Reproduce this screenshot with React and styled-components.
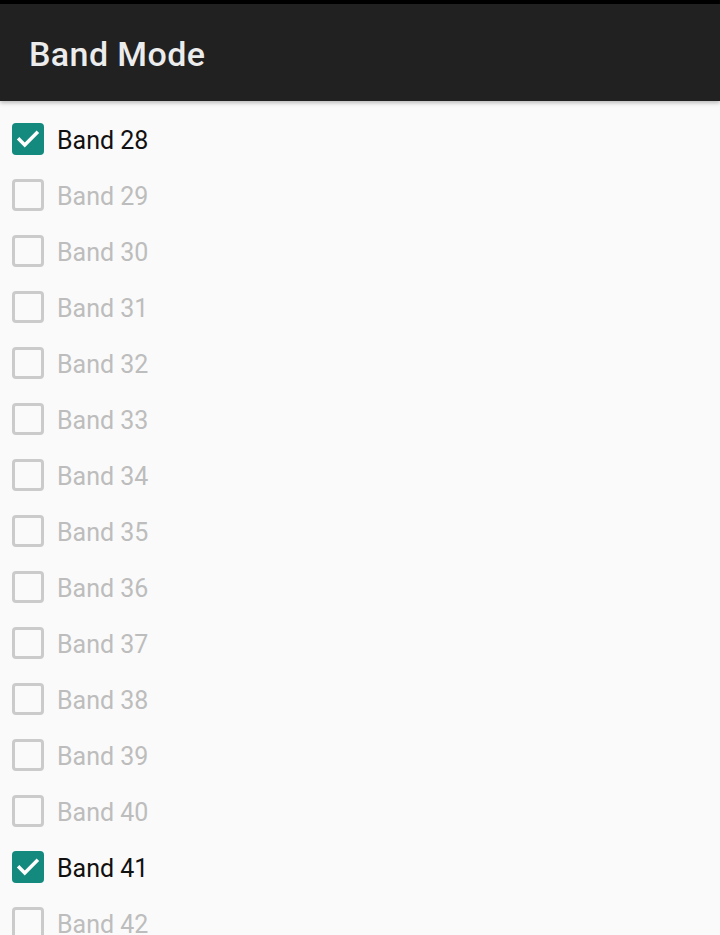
import React from 'react';
import styled, { createGlobalStyle } from 'styled-components';

const Global = createGlobalStyle`
  html, body {
    margin: 0;
    padding: 0;
    background: #fafafa;
    overflow: hidden;
  }
  body {
    font-family: Roboto, "Noto Sans", sans-serif;
  }
`;

const Screen = styled.div`
  width: 720px;
  height: 935px;
  overflow: hidden;
  background: #fafafa;
  border-top: 4px solid #000;
  box-sizing: border-box;
`;

const AppBar = styled.header`
  height: 97px;
  background: #212121;
  display: flex;
  align-items: center;
  padding: 3px 0 0 29px;
  box-sizing: border-box;
  box-shadow: 0 2px 4px rgba(0, 0, 0, 0.25);
  position: relative;
  z-index: 1;
`;

const Title = styled.h1`
  margin: 0;
  font-size: 34px;
  font-weight: 500;
  color: #ececec;
  letter-spacing: 0.4px;
`;

const List = styled.ul`
  list-style: none;
  margin: 0;
  padding: 10px 0 0;
`;

const Row = styled.li`
  height: 56px;
  display: flex;
  align-items: center;
  padding-left: 12px;
  gap: 13px;
`;

const Box = styled.span`
  width: 32px;
  height: 32px;
  box-sizing: border-box;
  border-radius: 4px;
  display: flex;
  align-items: center;
  justify-content: center;
  background: ${p => (p.checked ? '#138a7d' : 'transparent')};
  border: ${p => (p.checked ? 'none' : '3px solid #cbcbcb')};
`;

const Label = styled.span`
  font-size: 25px;
  padding-top: 2px;
  color: ${p => (p.checked ? '#111' : '#bdbdbd')};
`;

const bands = [];
for (let n = 28; n <= 42; n++) bands.push({ n, checked: n === 28 || n === 41 });

const Check = () => (
  <svg width="26" height="26" viewBox="0 0 24 24">
    <path d="M4 12.5l5 5 11-11" fill="none" stroke="#fff" strokeWidth="3.2" strokeLinecap="square" />
  </svg>
);

export default function App() {
  return (
    <>
      <Global />
      <Screen>
        <AppBar>
          <Title>Band Mode</Title>
        </AppBar>
        <List>
          {bands.map(b => (
            <Row key={b.n}>
              <Box checked={b.checked}>{b.checked && <Check />}</Box>
              <Label checked={b.checked}>Band {b.n}</Label>
            </Row>
          ))}
        </List>
      </Screen>
    </>
  );
}
